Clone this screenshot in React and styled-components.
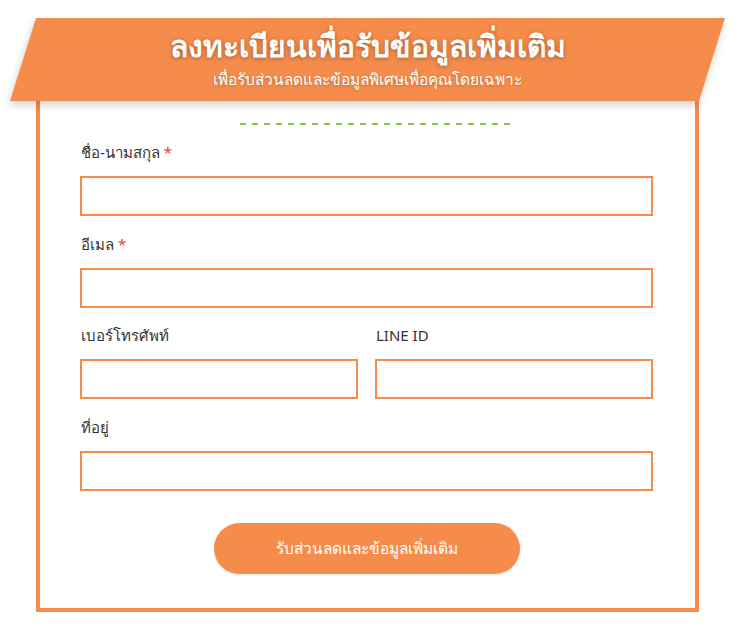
import React from 'react';
import styled, { createGlobalStyle } from 'styled-components';

const ORANGE = '#f68c4b';

const GlobalStyle = createGlobalStyle`
  body {
    margin: 0;
    background: #ffffff;
    font-family: "Noto Sans", "DejaVu Sans", sans-serif;
  }
`;

const Page = styled.div`
  padding: 18px 0 0 36px;
  width: 663px;
`;

const Banner = styled.div`
  position: relative;
  z-index: 2;
  height: 83px;
  margin: 0 -13px;
  display: flex;
  flex-direction: column;
  align-items: center;
  color: #fff;

  &::before {
    content: '';
    position: absolute;
    inset: 0;
    background: ${ORANGE};
    transform: skewX(-17.4deg);
    box-shadow: 0 4px 8px rgba(0, 0, 0, 0.18);
    z-index: -1;
  }
`;

const Title = styled.h1`
  margin: 8px 0 0;
  font-size: 30px;
  line-height: 40px;
  font-weight: 700;
  text-shadow: 0 1px 4px rgba(0, 0, 0, 0.35);
`;

const Subtitle = styled.p`
  margin: 3px 0 0;
  font-size: 15.5px;
  line-height: 20px;
  text-shadow: 0 1px 3px rgba(0, 0, 0, 0.25);
`;

const Box = styled.div`
  position: relative;
  z-index: 1;
  border: 4px solid ${ORANGE};
  border-top: none;
  padding: 22px 42px 34px 40px;
`;

const Dash = styled.div`
  width: 270px;
  height: 2px;
  margin: 0 auto 15px;
  transform: translateX(8px);
  background: repeating-linear-gradient(
    90deg,
    #8cc63f 0 6px,
    transparent 6px 12px
  );
`;

const Form = styled.form`
  display: flex;
  flex-direction: column;
  gap: 15.6px;
`;

const Row = styled.div`
  display: grid;
  grid-template-columns: 1fr 1fr;
  gap: 17px;
`;

const Field = styled.div`
  display: flex;
  flex-direction: column;
`;

const Label = styled.label`
  font-size: 15px;
  line-height: 24px;
  height: 24px;
  color: #333;
  margin: 0 0 12px 1px;
`;

const Star = styled.span`
  color: #e8412c;
  margin-left: 4px;
`;

const Input = styled.input`
  box-sizing: border-box;
  width: 100%;
  height: 40px;
  border: 2px solid ${ORANGE};
  border-radius: 0;
  background: #fff;
  outline: none;
  font: inherit;
`;

const Submit = styled.button`
  align-self: center;
  margin: 17px 0 0;
  width: 306px;
  height: 51px;
  border: none;
  border-radius: 26px;
  background: ${ORANGE};
  color: #fff;
  font-family: inherit;
  font-size: 15.5px;
  box-shadow: 0 1px 3px rgba(0, 0, 0, 0.12);
  cursor: pointer;
`;

const TextField = ({ label, required }) => (
  <Field>
    <Label>
      {label}
      {required && <Star>*</Star>}
    </Label>
    <Input type="text" />
  </Field>
);

export default function App() {
  return (
    <>
      <GlobalStyle />
      <Page>
        <Banner>
          <Title>ลงทะเบียนเพื่อรับข้อมูลเพิ่มเติม</Title>
          <Subtitle>เพื่อรับส่วนลดและข้อมูลพิเศษเพื่อคุณโดยเฉพาะ</Subtitle>
        </Banner>
        <Box>
          <Dash />
          <Form onSubmit={e => e.preventDefault()}>
            <TextField label="ชื่อ-นามสกุล" required />
            <TextField label="อีเมล" required />
            <Row>
              <TextField label="เบอร์โทรศัพท์" />
              <TextField label="LINE ID" />
            </Row>
            <TextField label="ที่อยู่" />
            <Submit type="submit">รับส่วนลดและข้อมูลเพิ่มเติม</Submit>
          </Form>
        </Box>
      </Page>
    </>
  );
}
